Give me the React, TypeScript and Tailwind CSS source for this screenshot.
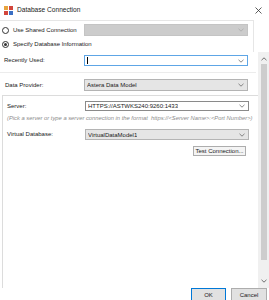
import React from "react";

function Chevron({ color = "#7a7a7a" }: { color?: string }) {
  return (
    <svg width="6" height="4" viewBox="0 0 6 4" className="shrink-0">
      <path d="M0.5 0.8 L3 3.2 L5.5 0.8" fill="none" stroke={color} strokeWidth="0.8" />
    </svg>
  );
}

function Radio({ checked }: { checked?: boolean }) {
  return (
    <span className="w-[7px] h-[7px] rounded-full border border-[#333] bg-white flex items-center justify-center shrink-0">
      {checked ? <span className="w-[3px] h-[3px] rounded-full bg-[#333]" /> : null}
    </span>
  );
}

function Combo({
  text,
  tone,
  h = "h-[12px]",
}: {
  text?: string;
  tone: "disabled" | "focus" | "drop" | "edit";
  h?: string;
}) {
  const styles = {
    disabled: "bg-[#cccccc] border-[#c4c4c4]",
    focus: "bg-white border-[#5ea6e6]",
    drop: "bg-[#e5e5e5] border-[#b4b4b4]",
    edit: "bg-white border-[#8a8a8a]",
  }[tone];
  return (
    <div className={`w-[164px] ${h} border ${styles} flex items-center justify-between pl-[2px] pr-[3px]`}>
      <span className="truncate leading-none">
        {tone === "focus" ? <span className="inline-block w-[1px] h-[7px] bg-black align-middle" /> : text}
      </span>
      <Chevron color={tone === "disabled" ? "#a8a8a8" : "#6a6a6a"} />
    </div>
  );
}

export default function App() {
  return (
    <div className="w-[269px] h-[300px] bg-white overflow-hidden flex flex-col font-['Liberation_Sans',_Arial,_sans-serif] text-[6px] text-[#1a1a1a]">
      {/* title bar */}
      <div className="h-[20px] flex items-center pl-[4px] pr-[6px] shrink-0">
        <svg width="9" height="9" viewBox="0 0 9 9" className="shrink-0">
          <rect x="0" y="0" width="4" height="4" fill="#e8a33c" />
          <rect x="5" y="0" width="4" height="4" fill="#d2463c" />
          <rect x="0" y="5" width="4" height="4" fill="#d2463c" />
          <rect x="5" y="5" width="4" height="4" fill="#3a6fc4" />
        </svg>
        <span className="ml-[4px] text-[6.6px] text-[#222]">Database Connection</span>
        <svg width="7" height="7" viewBox="0 0 7 7" className="ml-auto mr-[1px]">
          <path d="M0.5 0.5 L6.5 6.5 M6.5 0.5 L0.5 6.5" stroke="#333" strokeWidth="0.8" />
        </svg>
      </div>

      {/* connection type */}
      <div className="h-[32px] w-[254px] border-t border-r border-[#e6e6e6] pt-[3px] shrink-0">
        <div className="h-[12px] flex items-center">
          <div className="w-[84px] flex items-center pl-[2px]">
            <Radio />
            <span className="ml-[4px]">Use Shared Connection</span>
          </div>
          <Combo tone="disabled" />
        </div>
        <div className="h-[12px] mt-[2px] flex items-center pl-[2px]">
          <Radio checked />
          <span className="ml-[4px]">Specify Database Information</span>
        </div>
      </div>

      {/* main scroll area */}
      <div className="h-[236px] flex shrink-0">
        <div className="w-[258px] flex flex-col">
          <div className="h-[11px] mt-[3px] flex items-center">
            <span className="w-[84px] pl-[4px]">Recently Used:</span>
            <Combo tone="focus" h="h-[11px]" />
          </div>
          <div className="mt-[6px] h-px bg-[#ececec] mr-[2px]" />
          <div className="h-[12px] mt-[6px] flex items-center">
            <span className="w-[84px] pl-[5px]">Data Provider:</span>
            <Combo tone="drop" text="Astera Data Model" />
          </div>
          <div className="mt-[4px] ml-[2px] flex-1 border-t border-l border-[#dcdcdc] flex flex-col">
            <div className="h-[10px] mt-[5px] flex items-center">
              <span className="w-[82px] pl-[4px]">Server:</span>
              <Combo tone="edit" h="h-[10px]" text="HTTPS://ASTWKS240:9260:1433" />
            </div>
            <div className="mt-[3px] pl-[4px] italic text-[5.8px] text-[#8c8c8c] whitespace-nowrap leading-[8px]">
              (Pick a server or type a server connection in the format &nbsp;https://&lt;Server Name&gt;:&lt;Port Number&gt;)
            </div>
            <div className="h-[11px] mt-[7px] flex items-center">
              <span className="w-[82px] pl-[4px]">Virtual Database:</span>
              <Combo tone="drop" h="h-[11px]" text="VirtualDataModel1" />
            </div>
            <div className="flex mt-[6px] pl-[190px]">
              <button className="w-[53px] h-[10px] border border-[#adadad] bg-[#f4f4f4] flex items-center justify-center leading-none">
                Test Connection...
              </button>
            </div>
          </div>
        </div>
        {/* scrollbar */}
        <div className="w-[11px] bg-[#f0f0f0] flex flex-col items-center">
          <svg width="6" height="4" viewBox="0 0 6 4" className="mt-[5px]">
            <path d="M0.5 3.2 L3 0.8 L5.5 3.2" fill="none" stroke="#606060" strokeWidth="0.9" />
          </svg>
          <div className="w-[6px] h-[196px] mt-[3px] bg-[#cdcdcd]" />
          <svg width="6" height="4" viewBox="0 0 6 4" className="mt-auto mb-[5px]">
            <path d="M0.5 0.8 L3 3.2 L5.5 0.8" fill="none" stroke="#606060" strokeWidth="0.9" />
          </svg>
        </div>
      </div>

      {/* buttons */}
      <div className="h-[12px] flex justify-end items-start gap-[5px] pr-[2px] shrink-0">
        <button className="w-[35px] h-[13px] border border-[#0078d7] bg-[#e1e1e1] leading-none">OK</button>
        <button className="w-[36px] h-[13px] border border-[#adadad] bg-[#e1e1e1] leading-none">Cancel</button>
      </div>
    </div>
  );
}
